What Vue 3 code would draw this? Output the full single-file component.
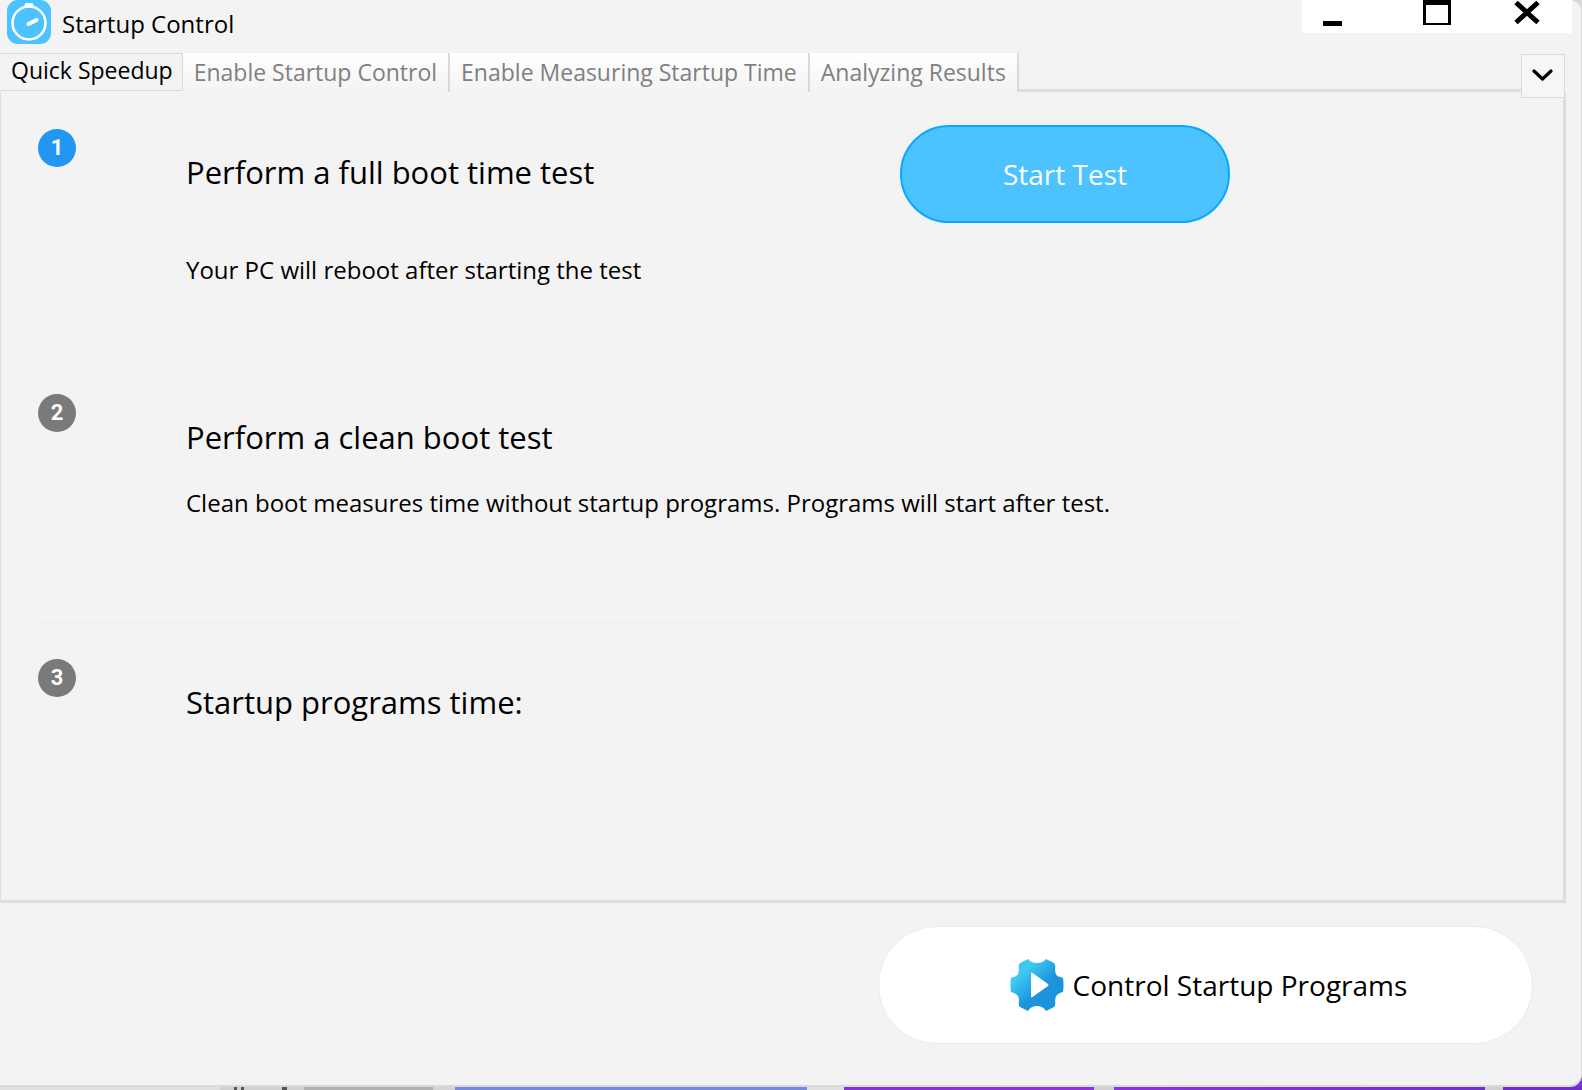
<script setup>
import { ref } from 'vue'

const tabs = ['Quick Speedup', 'Enable Startup Control', 'Enable Measuring Startup Time', 'Analyzing Results']
const active = ref(0)

const steps = [
  { title: 'Perform a full boot time test', note: 'Your PC will reboot after starting the test', action: 'Start Test', current: true },
  { title: 'Perform a clean boot test', note: 'Clean boot measures time without startup programs. Programs will start after test.' },
  { title: 'Startup programs time:' },
]
</script>

<template>
  <div class="desktop">
    <div class="window">
      <header class="titlebar">
        <svg class="logo" viewBox="0 0 46 46" aria-hidden="true">
          <rect x="1" y="0" width="44" height="44" rx="11" fill="#4cc2ff" />
          <circle cx="23" cy="23" r="16.500" fill="none" stroke="#fff" stroke-width="2.500" />
          <path d="M20.500 5h5" stroke="#fff" stroke-width="4" stroke-linecap="round" />
          <path d="M22.500 24l8-4" stroke="#fff" stroke-width="4" stroke-linecap="round" />
        </svg>
        <h1 class="app-name">Startup Control</h1>
        <div class="controls">
          <button type="button" class="control" aria-label="Minimize">
            <svg width="90" height="33" viewBox="0 0 90 33"><path d="M21 21h19v5H21z" /></svg>
          </button>
          <button type="button" class="control" aria-label="Maximize">
            <svg width="90" height="33" viewBox="0 0 90 33"><path fill-rule="evenodd" d="M31 0h28v25H31zM34 5v18h22V5z" /></svg>
          </button>
          <button type="button" class="control" aria-label="Close">
            <svg width="90" height="33" viewBox="0 0 90 33"><path d="M34 2.500L56 22.500M56 2.500L34 22.500" fill="none" stroke="#000" stroke-width="5" /></svg>
          </button>
        </div>
      </header>

      <nav class="tabbar" role="tablist">
        <button
          v-for="(tab, i) in tabs"
          :key="tab"
          type="button"
          role="tab"
          class="tab"
          :class="{ selected: i === active }"
          :aria-selected="i === active"
          @click="active = i"
        >{{ tab }}</button>
        <div class="tab-fill"></div>
        <button type="button" class="more" aria-label="More tabs">
          <svg width="22" height="14" viewBox="0 0 22 14"><path d="M2 2L10.500 10L19 2" fill="none" stroke="#000" stroke-width="3.200" stroke-linecap="round" stroke-linejoin="round" /></svg>
        </button>
      </nav>

      <main class="panel">
        <section v-for="(step, i) in steps" :key="step.title" class="step">
          <span class="badge" :class="{ current: step.current }">{{ i + 1 }}</span>
          <div class="step-text" :class="{ roomy: step.action }">
            <h2>{{ step.title }}</h2>
            <p v-if="step.note">{{ step.note }}</p>
          </div>
          <button v-if="step.action" type="button" class="start">{{ step.action }}</button>
        </section>
      </main>

      <footer class="footer">
        <button type="button" class="programs">
          <svg width="54" height="54" viewBox="0 0 54 54" aria-hidden="true">
            <defs>
              <linearGradient id="gear" x1="0.150" y1="0.150" x2="0.800" y2="0.800">
                <stop offset="0.150" stop-color="#3fc9f2" />
                <stop offset="0.650" stop-color="#1b94dc" />
              </linearGradient>
            </defs>
            <path
              fill="url(#gear)"
              d="M18 1Q21 5 27 5T36 1L44 5Q46 7 45 11Q45 18 50 19L53 20Q54 27 53 34L50 35Q45 37 45 43Q46 47 44 49L36 53Q33 48 27 48T18 53L10 49Q8 47 9 43Q9 37 4 35L1 34Q0 27 1 20L4 19Q9 18 9 11Q8 7 10 5Z"
            />
            <path fill="#fff" d="M21 15.500Q21 14 22.500 15L38 26Q39 27 38 28L22.500 39Q21 40 21 38.500Z" />
          </svg>
          <span>Control Startup Programs</span>
        </button>
      </footer>
    </div>
    <div class="taskbar" aria-hidden="true"></div>
  </div>
</template>

<style>
body {
  margin: 0;
}
</style>

<style scoped>
.desktop {
  display: flex;
  flex-direction: column;
  min-height: 100vh;
  background: linear-gradient(#d8d8d8 50%, #7a2fd8 50%);
  font-family: "Trebuchet MS", "Open Sans", sans-serif;
  color: #000;
}

button {
  margin: 0;
  padding: 0;
  border: 0;
  background: none;
  font: inherit;
  color: inherit;
  cursor: pointer;
}

.window {
  flex: 1;
  display: flex;
  flex-direction: column;
  box-sizing: border-box;
  border-right: 1px solid #dcdcdc;
  border-bottom: 2px solid #dadada;
  border-radius: 0 12px 12px 0;
  background: #f3f3f3;
}

.titlebar {
  display: flex;
  align-items: flex-start;
  height: 53px;
  padding: 0 9px 0 6px;
}

.logo {
  width: 46px;
  height: 46px;
}

.app-name {
  flex: 1;
  margin: 0 0 0 10px;
  font: 400 24px/48px "Segoe UI", "Open Sans", sans-serif;
}

.controls {
  display: flex;
  background: #fff;
}

.control,
.control svg {
  display: block;
}

.tabbar {
  display: flex;
  height: 39px;
  padding-right: 16px;
}

.tab {
  box-sizing: border-box;
  padding: 0 11px;
  border-right: 2px solid #d9d9d9;
  background: linear-gradient(#fff, #f3f3f3);
  color: #808080;
  font-size: 23px;
  line-height: 36px;
  padding-bottom: 2px;
  white-space: nowrap;
}

.tab.selected {
  height: 38px;
  padding: 0 9px 4px 11px;
  border: 1px solid #d9d9d9;
  border-left: 0;
  background: #f3f3f3;
  color: #000;
  line-height: 32px;
}

.tab-fill {
  flex: 1;
  box-sizing: border-box;
  border-bottom: 3px solid #dedede;
}

.more {
  z-index: 1;
  display: grid;
  place-items: center;
  box-sizing: border-box;
  width: 44px;
  height: 44px;
  margin-top: 1px;
  border: 1px solid #dcdcdf;
  background: #f5f6f8;
}

.panel {
  flex: 1;
  margin-right: 15px;
  padding-top: 2px;
  border: solid #dedede;
  border-width: 0 3px 3px 1px;
}

.step {
  display: grid;
  grid-template-columns: 40px 1fr auto;
  column-gap: 109px;
  align-items: start;
  box-sizing: border-box;
  max-width: 1208px;
  min-height: 265px;
  margin-left: 36px;
  border-bottom: 2px solid #f0f0f0;
}

.step:last-child {
  border-bottom: 0;
}

.badge {
  justify-self: center;
  margin-top: 35px;
  width: 38px;
  height: 38px;
  border-radius: 50%;
  background: #7a7a7a;
  color: #fff;
  font: 700 22px/38px Roboto, sans-serif;
  text-align: center;
}

.badge.current {
  background: #2196f3;
}

.step-text {
  display: flex;
  flex-direction: column;
  gap: 28px;
  padding-top: 56px;
  white-space: nowrap;
}

.step-text.roomy {
  gap: 60px;
}

h2 {
  margin: 0;
  font-size: 31px;
  font-weight: 400;
  line-height: 44px;
}

p {
  margin: 0;
  font-size: 24px;
  line-height: 32px;
}

.start {
  width: 330px;
  height: 98px;
  margin: 31px 15px 0 0;
  border: 2px solid #06a9ff;
  border-radius: 49px;
  background: #4cc2ff;
  color: #fff;
  font-size: 28px;
}

.footer {
  display: flex;
  justify-content: flex-end;
  padding: 23px 48px 41px;
}

.programs {
  display: flex;
  align-items: center;
  justify-content: center;
  gap: 9px;
  box-sizing: border-box;
  width: 655px;
  height: 118px;
  padding-left: 6px;
  border: 1px solid #ebebeb;
  border-radius: 59px;
  background: #fff;
  font-size: 28px;
}

.taskbar {
  height: 3px;
  background: linear-gradient(
    90deg,
    #e0e0e0 220px, #d0d0d0 220px 234px, #555 234px 237px, #d0d0d0 237px 241px, #555 241px 244px,
    #d0d0d0 244px 282px, #555 282px 287px, #d0d0d0 287px 304px, #b0b0b0 304px 433px, #d4d4d4 433px 455px,
    #7688dd 455px 807px, #e0e0e0 807px 844px, #8630d6 844px, #9233dc 1094px, #d0d0d0 1094px 1114px,
    #8f33dc 1114px, #702fca 1485px, #d0d0d0 1485px 1503px, #702fca 1503px
  );
}
</style>
